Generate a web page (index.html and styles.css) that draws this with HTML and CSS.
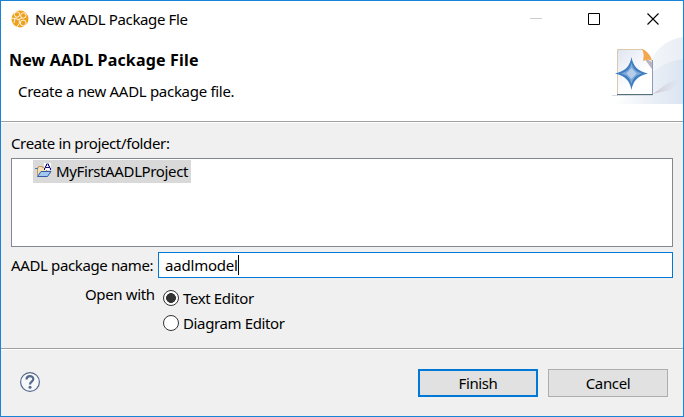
FILE: index.html
```html
<!DOCTYPE html>
<html lang="en">
<head>
<meta charset="utf-8">
<title>New AADL Package Fle</title>
<link rel="stylesheet" href="styles.css">
</head>
<body>
<main class="dialog">
  <header class="titlebar">
    <svg class="app-icon" width="18" height="18" viewBox="0 0 18 18">
      <circle cx="9" cy="9" r="8.5" fill="#f0a11c"/>
      <g fill="none" stroke="#fff" stroke-width="0.9">
        <circle cx="6" cy="4.500" r="2.700"/><circle cx="12.300" cy="5.500" r="2.700"/>
        <circle cx="12.200" cy="13" r="2.900"/><path d="M0 8 4 8.500 8 9.500 8.500 13 6 17M4 8.500 3 13M8 9.500 11 8"/>
      </g>
    </svg>
    <span class="window-title">New AADL Package Fle</span>
    <svg class="window-controls" width="102" height="14" viewBox="0 0 102 14">
      <path d="M0 6.500h12" stroke="#ccc"/>
      <path d="M58.500 1.500h11v11h-11z" fill="none" stroke="#000"/>
      <path d="M117.500 1.500l11 11m0-11l-11 11" stroke="#000" stroke-width="1.100"/>
    </svg>
  </header>
  <section class="banner">
    <div class="banner-text">
      <h1>New AADL Package File</h1>
      <p>Create a new AADL package file.</p>
    </div>
    <svg class="banner-art" width="71" height="68" viewBox="0 0 71 68">
      <defs>
        <linearGradient id="haze" x1="0" y1="0" x2="1" y2="0"><stop offset="0" stop-color="#fff"/><stop offset="1" stop-color="#dbe4f0"/></linearGradient>
        <linearGradient id="haze2" x1="0" y1="0" x2="1" y2="0"><stop offset="0" stop-color="#fff"/><stop offset="1" stop-color="#e9eef5"/></linearGradient>
        <linearGradient id="page" x1="0" y1="0" x2=".7" y2="1"><stop offset="0" stop-color="#dfe5f1"/><stop offset=".7" stop-color="#fff"/></linearGradient>
        <linearGradient id="shade" x1="0" y1="0" x2="1" y2="0"><stop offset="0" stop-color="#cbc4d0"/><stop offset="1" stop-color="#dce3ee" stop-opacity="0"/></linearGradient>
      </defs>
      <path d="M34 34C42 14 54 3 71 1v67H0l10-8z" fill="url(#haze2)"/>
      <path d="M0 68C24 65 34 27 71 23v45z" fill="url(#haze)"/>
      <path d="M41 58 56 47 71 42 58 54z" fill="url(#shade)"/>
      <path d="M0 59h42l-3 1H0z" fill="#d5dae3"/>
      <path d="M5.500 13.500H31L40 24v34.500H5.500z" fill="url(#page)"/>
      <path d="M5.500 58V13.500H31" fill="none" stroke="#dcc8ac"/>
      <path d="M40.500 24v34" stroke="#8d9db9"/>
      <path d="M5 58.500h36" stroke="#547477"/>
      <path d="M31 21 40 26v7z" fill="#b9b5c1"/>
      <path d="M30 13c4 1 9 6 10 12-3-2-6-1-9 0 1-4 1-8-1-12z" fill="#f2a84f"/>
      <path d="M19.500 21C21 30 26 35.500 36 37.500 26 39.500 21 45 19.500 54 18 45 13 39.500 3 37.500 13 35.500 18 30 19.500 21z" fill="#3f7fc1"/>
      <path d="M19.500 27C21 33 24 36 30 37.500 24 39 21 42 19.500 48 18 42 15 39 9 37.500 15 36 18 33 19.500 27z" fill="#7fa9d8"/>
      <path d="M19.500 32l5 5.500-5 5.500-5-5.500z" fill="#b5cdea"/>
    </svg>
  </section>
  <section class="form">
    <div class="folder-label">Create in project/folder:</div>
    <div class="tree">
      <div class="tree-item">
        <svg width="17" height="16" viewBox="0 0 17 16">
          <path d="M2.500 12.500v-8h1v-1h4v1h4v6" fill="#f5dfae" stroke="#c09a5a"/>
          <path d="M0 5.500h3" stroke="#5371b4"/>
          <path d="M2.500 13.500 6 8.500h10l-3.500 5z" fill="#9fc9ee" stroke="#3858a8"/>
          <path d="M9 0h7v7H9z" fill="#fff"/>
          <path d="M9.500 7V5h1V3h1V1h2v2h1v2h1v2M10.500 4.500h4" fill="none" stroke="#141482"/>
        </svg>
        <span>MyFirstAADLProject</span>
      </div>
    </div>
    <div class="name-row">
      <span class="name-label">AADL package name:</span>
      <div class="name-input"><span class="value">aadlmodel</span><i class="caret"></i></div>
    </div>
    <div class="open-row">
      <span class="open-label">Open with</span>
      <div class="options">
        <div class="option"><i class="radio checked"></i><span>Text Editor</span></div>
        <div class="option"><i class="radio"></i><span>Diagram Editor</span></div>
      </div>
    </div>
  </section>
  <footer class="footer">
    <svg class="help" width="20" height="20" viewBox="0 0 20 20">
      <circle cx="10" cy="10" r="9.400" fill="#f7f8fa" stroke="#566a8c" stroke-width="1.200"/>
      <path d="M6.500 7.500C6.500 3 13.300 3 13.300 7c0 2.600-3.300 2.600-3.300 5.500" fill="none" stroke="#566a8c" stroke-width="2.200"/>
      <circle cx="10" cy="15.300" r="1.500" fill="#566a8c"/>
    </svg>
    <div class="button primary"><span>Finish</span></div>
    <div class="button"><span>Cancel</span></div>
  </footer>
</main>
</body>
</html>
```
FILE: styles.css
```css
* { box-sizing: border-box; }
body { margin: 0; }
.dialog {
  width: 684px; height: 417px;
  display: flex; flex-direction: column;
  border: 1px solid #1883d7;
  background: #fff; color: #000;
  font: 15px/20px "Noto Sans", "Open Sans", sans-serif;
  letter-spacing: -0.37px;
  white-space: nowrap;
}
.titlebar { height: 36px; flex: none; display: flex; align-items: center; padding-left: 10px; }
.window-title { margin-left: 6px; }
.window-controls { margin-left: auto; margin-right: 51px; overflow: visible; }
.banner { height: 84px; flex: none; display: flex; justify-content: space-between; }
.banner-text { padding: 13px 0 0 8px; }
h1 { margin: 0; font-size: 16px; line-height: 20px; font-weight: 700; letter-spacing: 0.17px; }
p { margin: 11px 0 0 9px; letter-spacing: -0.3px; }
.banner-art { margin-top: -1px; }
.form {
  height: 227px; flex: none;
  border-top: 1px solid #a0a0a0; box-shadow: inset 0 1px #fff;
  background: #f0f0f0; padding: 11px 10px 0;
}
.folder-label { height: 25px; }
.tree { height: 89px; border: 1px solid #828790; background: #fff; padding: 1px 0 0 21px; }
.tree-item { width: 158px; height: 23px; display: flex; align-items: center; gap: 5px; padding: 0 0 1px 2px; background: #d9d9d9; }
.tree-item svg { flex: none; margin-right: -1px; }
.name-row { margin-top: 5px; display: flex; align-items: center; }
.name-label { width: 147px; }
.name-input { flex: 1; height: 26px; display: flex; align-items: center; border: 1px solid #0078d7; background: #fff; padding-left: 6px; }
.value { letter-spacing: -0.2px; }
.caret { width: 1px; height: 20px; background: #000; }
.open-row { display: flex; }
.open-label { width: 152px; padding: 6px 0 0 74px; }
.options { padding-top: 8px; }
.option { display: flex; align-items: flex-start; gap: 4px; height: 25px; padding-top: 2px; }
.radio { width: 16px; height: 16px; margin-top: 2px; border: 1px solid #333; border-radius: 50%; background: #fff; }
.checked { background: radial-gradient(circle, #333 0 4.6px, #fff 5.2px); }
.footer {
  flex: 1; display: flex; align-items: flex-start;
  border-top: 1px solid #a0a0a0; box-shadow: inset 0 1px #fff;
  background: #f0f0f0; padding: 20px 15px 0 19px;
}
.help { margin: 3px auto 0 0; }
.button { width: 120px; height: 28px; display: flex; align-items: center; justify-content: center; border: 1px solid #adadad; background: #e1e1e1; }
.primary { margin-right: 10px; border: 2px solid #0078d7; }
```
